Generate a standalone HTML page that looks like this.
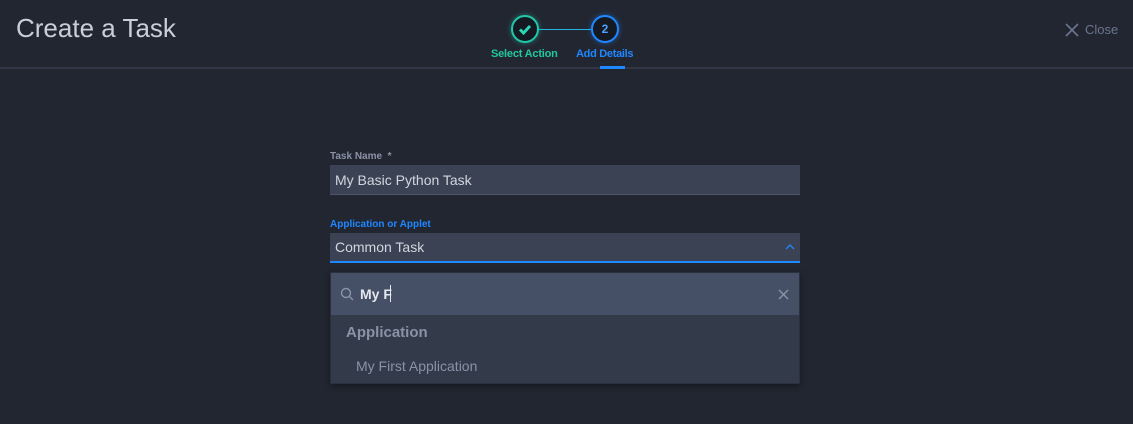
<!DOCTYPE html>
<html><head><style>
*{margin:0;padding:0;box-sizing:border-box}
body{width:1133px;height:424px;background:#222631;font-family:"Liberation Sans",sans-serif;position:relative;overflow:hidden}
.a{position:absolute}
</style></head><body>
<div class="a" style="left:16px;top:13px;font-size:26px;color:#c9ced8;">Create a Task</div>
<div class="a" style="left:0;top:67px;width:1133px;height:2px;background:#303643"></div>
<div class="a" style="left:600px;top:66px;width:25px;height:3px;background:#1f87ff"></div>
<div class="a" style="left:538px;top:29px;width:56px;height:1px;background:#1fb6e0"></div>
<div class="a" style="left:511px;top:15px;width:28px;height:28px;border-radius:50%;border:2px solid #21c7a8;background:#151a22;box-shadow:0 0 6px rgba(33,199,168,.5)">
<svg width="24" height="24" viewBox="0 0 24 24" style="position:absolute;left:0;top:0"><path d="M7 12.5l3.5 3.5L17 9" stroke="#2ad6b3" stroke-width="3" fill="none"/></svg></div>
<div class="a" style="left:591px;top:15px;width:28px;height:28px;border-radius:50%;border:2px solid #1f87ff;background:#151a22;box-shadow:0 0 6px rgba(31,135,255,.5);color:#4ea0ff;font-size:12px;font-weight:bold;text-align:center;line-height:24px">2</div>
<div class="a" style="left:491px;top:48px;font-size:11px;font-weight:bold;color:#21c7a0;letter-spacing:-0.2px">Select Action</div>
<div class="a" style="left:576px;top:48px;font-size:11px;font-weight:bold;color:#1f87ff;letter-spacing:-0.3px">Add Details</div>
<svg class="a" style="left:1065px;top:23px" width="14" height="14"><path d="M1 1L13 13M13 1L1 13" stroke="#6b7590" stroke-width="1.6"/></svg>
<div class="a" style="left:1085px;top:22px;font-size:13px;color:#6b7590">Close</div>

<div class="a" style="left:330px;top:151px;font-size:10px;font-weight:bold;color:#8a92a6">Task Name &nbsp;*</div>
<div class="a" style="left:330px;top:165px;width:470px;height:30px;background:#3b4254;border-bottom:1px solid #4e5568;color:#d2d6de;font-size:14px;padding:7px 0 0 5px">My Basic Python Task</div>
<div class="a" style="left:330px;top:219px;font-size:10px;font-weight:bold;color:#1f87ff">Application or Applet</div>
<div class="a" style="left:330px;top:233px;width:470px;height:30px;background:#3b4254;border-bottom:2px solid #1f87ff;color:#d2d6de;font-size:14px;padding:6px 0 0 5px">Common Task</div>
<svg class="a" style="left:785px;top:243px" width="10" height="7"><path d="M1 6L5 2L9 6" stroke="#1f87ff" stroke-width="1.3" fill="none"/></svg>

<div class="a" style="left:330px;top:272px;width:470px;height:112px;background:#333a4a;border:1px solid #2a303c;box-shadow:0 2px 6px rgba(0,0,0,.4)"></div>
<div class="a" style="left:331px;top:273px;width:468px;height:42px;background:#454f66"></div>
<svg class="a" style="left:340px;top:287px" width="14" height="14"><circle cx="6" cy="6" r="4.5" stroke="#8a93a8" stroke-width="1.4" fill="none"/><path d="M9.5 9.5L13 13" stroke="#8a93a8" stroke-width="1.4"/></svg>
<div class="a" style="left:360px;top:286px;font-size:14px;font-weight:bold;color:#e4e7ee">My F</div>
<div class="a" style="left:390px;top:285px;width:1px;height:17px;background:#e4e7ee"></div>
<svg class="a" style="left:778px;top:289px" width="11" height="11"><path d="M1 1L10 10M10 1L1 10" stroke="#8a93a8" stroke-width="1.4"/></svg>
<div class="a" style="left:346px;top:324px;font-size:15px;font-weight:bold;color:#8a92a6">Application</div>
<div class="a" style="left:356px;top:358px;font-size:14px;color:#8a92a6">My First Application</div>
</body></html>
